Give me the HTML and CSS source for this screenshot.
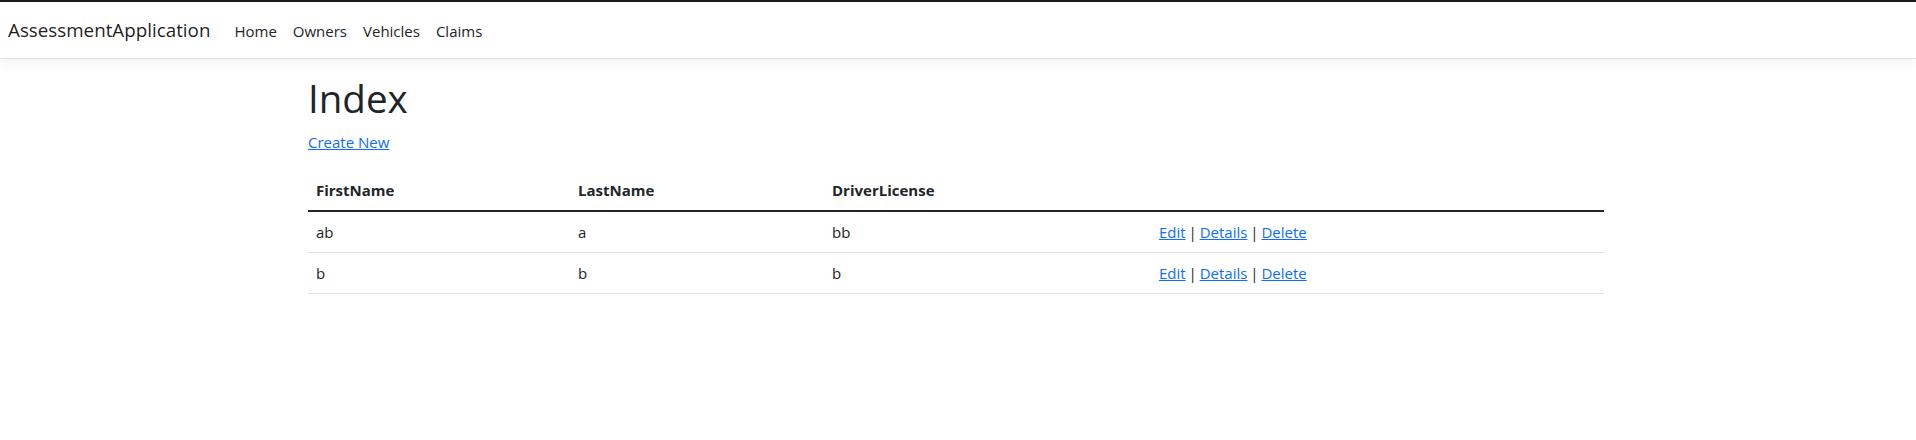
FILE: index.html
```html
<!DOCTYPE html>
<html lang="en">
<head>
<meta charset="utf-8">
<title>Index - AssessmentApplication</title>
<link rel="stylesheet" href="styles.css">
</head>
<body>
<header class="site-header">
  <nav class="navbar">
    <div class="navbar-inner">
      <a class="navbar-brand" href="#">AssessmentApplication</a>
      <ul class="navbar-nav">
        <li><a class="nav-link" href="#">Home</a></li>
        <li><a class="nav-link" href="#">Owners</a></li>
        <li><a class="nav-link" href="#">Vehicles</a></li>
        <li><a class="nav-link" href="#">Claims</a></li>
      </ul>
    </div>
  </nav>
</header>
<div class="page">
  <main class="container">
    <h1 class="title">Index</h1>
    <p class="create"><a href="#">Create New</a></p>
    <table class="table">
      <thead>
        <tr>
          <th class="col-first">FirstName</th>
          <th class="col-last">LastName</th>
          <th class="col-license">DriverLicense</th>
          <th class="col-actions"></th>
        </tr>
      </thead>
      <tbody>
        <tr>
          <td>ab</td>
          <td>a</td>
          <td>bb</td>
          <td class="actions"><a href="#">Edit</a> | <a href="#">Details</a> | <a href="#">Delete</a></td>
        </tr>
        <tr>
          <td>b</td>
          <td>b</td>
          <td>b</td>
          <td class="actions"><a href="#">Edit</a> | <a href="#">Details</a> | <a href="#">Delete</a></td>
        </tr>
      </tbody>
    </table>
  </main>
</div>
</body>
</html>
```
FILE: styles.css
```css
* { box-sizing: border-box; }

html, body {
  margin: 0;
  padding: 0;
  background: #fff;
}

body {
  font-family: "Open Sans", "Noto Sans", sans-serif;
  font-size: 15px;
  line-height: 24px;
  color: #212529;
  border-top: 2px solid #1c1c1e;
}

a { color: #0d6efd; text-decoration: underline; }

.site-header {
  margin-bottom: 16px;
}

.navbar {
  background: #fff;
  border-bottom: 1px solid #dee2e6;
  box-shadow: 0 4px 12px rgba(0, 0, 0, 0.05);
  padding: 8px 0;
}

.navbar-inner {
  display: flex;
  align-items: center;
  padding: 0 12px 0 8px;
}

.navbar-brand {
  font-size: 18.8px;
  line-height: 30px;
  padding: 5px 0;
  margin-right: 16px;
  color: rgba(0, 0, 0, 0.9);
  text-decoration: none;
  white-space: nowrap;
}

.navbar-nav {
  display: flex;
  list-style: none;
  margin: 0;
  padding: 0;
}

.nav-link {
  display: block;
  padding: 9px 8px 7px;
  line-height: 24px;
  color: #212529;
  text-decoration: none;
}

.page {
  padding-right: 4px;
}

.container {
  display: block;
  max-width: 1320px;
  margin: 0 auto;
  padding: 0 12px 16px;
}

.title {
  margin: -1px 0 8px;
  font-size: 38.5px;
  line-height: 48px;
  font-weight: 400;
}

.create {
  margin: 0 0 16px;
}

.table {
  width: 100%;
  border-collapse: collapse;
  table-layout: fixed;
  margin-bottom: 16px;
}

.table th,
.table td {
  padding: 8px;
  text-align: left;
  vertical-align: top;
  border-bottom: 1px solid #dee2e6;
}

.table th {
  font-weight: 700;
  border-bottom: 2px solid #212529;
}

.actions {
  word-spacing: -1px;
}

.col-first { width: 262px; }
.col-last { width: 254px; }
.col-license { width: 327px; }
.col-actions { width: auto; }
```
